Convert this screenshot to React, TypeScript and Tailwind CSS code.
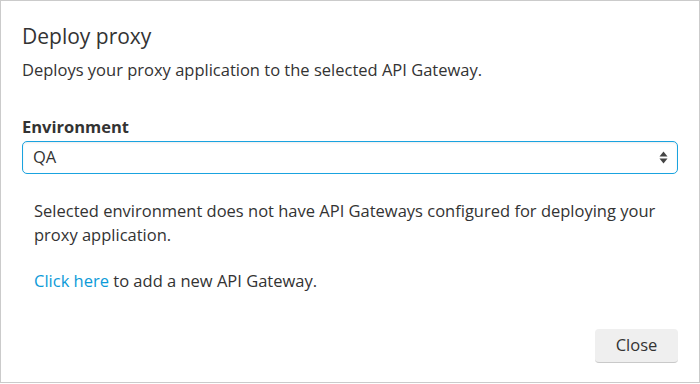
export default function App() {
  return (
    <div className="h-[384px] w-[700px] bg-white">
      <div
        className="flex h-[383px] w-[700px] flex-col border border-[#cbcbcb] px-[21px] pt-[21px] text-[#333333]"
        style={{ fontFamily: '"Open Sans", sans-serif' }}
      >
        <h2 className="text-[21px] leading-[28px]">Deploy proxy</h2>
        <p className="mt-[9px] text-[16.5px] leading-[22px]">
          Deploys your proxy application to the selected API Gateway.
        </p>

        <label className="mt-[35px] text-[16.5px] font-bold leading-[22px]">Environment</label>
        <div className="mt-[3px] flex h-[33px] w-[656px] items-center justify-between rounded-[5px] border border-[#1aa3df] pl-[10px] pr-[9px] shadow-[inset_0_1px_2px_rgba(0,0,0,0.08)]">
          <span className="text-[16.5px]">QA</span>
          <svg width="9" height="13" viewBox="0 0 9 13" className="text-[#444]">
            <path d="M4.5 0.5 L8.5 5.5 H0.5 Z" fill="currentColor" />
            <path d="M4.5 12.5 L8.5 7.5 H0.5 Z" fill="currentColor" />
          </svg>
        </div>

        <div className="px-3">
          <p className="mt-[25px] text-[16.5px] leading-[24px]">
            Selected environment does not have API Gateways configured for deploying your proxy application.
          </p>
          <p className="mt-[22px] text-[16.5px] leading-[24px]">
            <a className="text-[#0c9ad8]">Click here</a> to add a new API Gateway.
          </p>
        </div>

        <div className="mt-auto mb-[19px] flex justify-end">
          <button className="h-[34px] w-[83px] rounded-[4px] border-b border-[#c9c9c9] bg-[#efefef] text-[16.5px] text-[#333]">
            Close
          </button>
        </div>
      </div>
    </div>
  );
}
